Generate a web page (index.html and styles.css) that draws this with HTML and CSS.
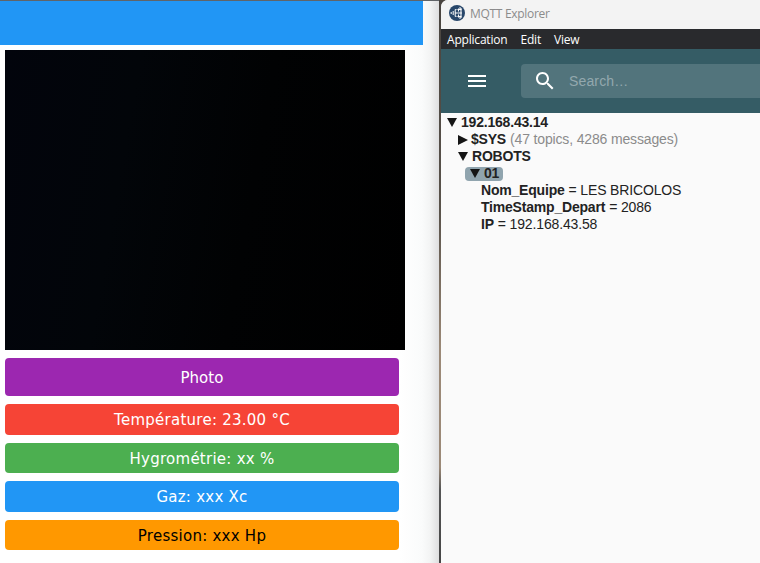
FILE: index.html
```html
<!DOCTYPE html>
<html lang="fr">
<head>
<meta charset="utf-8">
<title>Robot</title>
<link rel="stylesheet" href="styles.css">
</head>
<body>
<div class="desktop">
  <main class="robot">
    <header class="robot-bar"></header>
    <div class="camera"></div>
    <div class="controls">
      <div class="tile photo"><span>Photo</span></div>
      <div class="tile temp"><span>Température: 23.00 °C</span></div>
      <div class="tile hygro"><span>Hygrométrie: xx %</span></div>
      <div class="tile gaz"><span>Gaz: xxx Xc</span></div>
      <div class="tile pression"><span>Pression: xxx Hp</span></div>
    </div>
  </main>
  <section class="explorer">
    <div class="titlebar">
      <svg class="logo" viewBox="0 0 16 16"><circle cx="8" cy="8" r="8" fill="#28476b"/><g fill="none" stroke="#fff"><path d="M7.5 4.6H6.2v6.8h1.3M2.2 7v2M4.2 6v4M6 8h2.5" stroke-width="1"/><path d="M8.5 4.5h4M8.5 8h4.5M8.5 11.5h4M10 3h2M10 13h2" stroke-width="1.2"/><path d="M9.5 3.5v3M9.5 9.5v3M12 3v10" stroke-width="1.1"/></g></svg>
      <span class="title">MQTT Explorer</span>
    </div>
    <nav class="menubar"><span>Application</span><span>Edit</span><span>View</span></nav>
    <div class="toolbar">
      <svg class="burger" viewBox="0 0 24 24"><path d="M3 18h18v-2H3v2zm0-5h18v-2H3v2zm0-7v2h18V6H3z"/></svg>
      <div class="search">
        <svg class="lens" viewBox="0 0 24 24"><path d="M15.5 14h-.79l-.28-.27C15.41 12.59 16 11.11 16 9.5 16 5.91 13.09 3 9.5 3S3 5.91 3 9.5 5.91 16 9.5 16c1.61 0 3.09-.59 4.23-1.57l.27.28v.79l5 4.99L20.49 19l-4.99-5zm-6 0C7.01 14 5 11.99 5 9.5S7.01 5 9.5 5 14 7.01 14 9.5 11.99 14 9.5 14z"/></svg>
        <span class="placeholder">Search…</span>
      </div>
    </div>
    <div class="tree">
      <div class="row l0"><i class="down"></i><b>192.168.43.14</b></div>
      <div class="row l1"><i class="right"></i><b>$SYS</b><span class="meta">(47 topics, 4286 messages)</span></div>
      <div class="row l1"><i class="down"></i><b>ROBOTS</b></div>
      <div class="row l2"><span class="selected"><i class="down"></i><b>01</b></span></div>
      <div class="row l3"><b>Nom_Equipe</b><span>= LES BRICOLOS</span></div>
      <div class="row l3"><b>TimeStamp_Depart</b><span>= 2086</span></div>
      <div class="row l3"><b>IP</b><span>= 192.168.43.58</span></div>
    </div>
  </section>
</div>
</body>
</html>
```
FILE: styles.css
```css
* { box-sizing: border-box; }
body { margin: 0; overflow: hidden; }
.desktop {
  display: flex;
  width: 760px;
  height: 563px;
  background: linear-gradient(#49443f, #5a534b 38%, #9b8977 62%, #9b8977 83%, #555 87%, #454545);
}
.robot {
  width: 439px;
  margin-right: 2px;
  border-top: 1px solid #606468;
  background: linear-gradient(90deg, #fff 400px, #fafbfb 422px, #f3f4f4 430px, #dededf 439px);
}
.robot-bar { width: 423px; height: 44px; background: #2196f5; }
.camera {
  width: 400px;
  height: 300px;
  margin: 5px 0 8px 5px;
  background: linear-gradient(100deg, #02040c, #020509 30%, #010203 60%, #000);
}
.controls {
  display: grid;
  grid-template-rows: 38px 31px 30px 31px 30px;
  row-gap: 8px;
  width: 394px;
  margin-left: 5px;
}
.tile {
  display: flex;
  align-items: center;
  justify-content: center;
  border-radius: 4px;
  color: #fff;
  font: 15px "DejaVu Sans", Verdana, sans-serif;
  letter-spacing: .25px;
  white-space: nowrap;
}
.photo { padding-top: 2px; background: #9c27b0; letter-spacing: .05px; }
.temp { background: #f64436; }
.hygro { padding-top: 2px; background: #4caf50; }
.gaz { background: #2196f5; }
.pression { padding-top: 2px; background: #ff9800; color: #000; }

.explorer { flex: 1; background: #fafafa; border-top-left-radius: 7px; overflow: hidden; }
.titlebar {
  display: flex;
  align-items: center;
  height: 29px;
  padding: 0 0 3px 8px;
  background: #f3f3f3;
}
.logo { width: 16px; height: 16px; margin-right: 5px; }
.title { color: #8b8b8b; font: 12px "Open Sans", sans-serif; letter-spacing: -.3px; }
.menubar {
  display: flex;
  align-items: center;
  gap: 13px;
  height: 20px;
  padding-left: 6px;
  background: #292a2d;
  color: #fff;
  font: 12px "Open Sans", sans-serif;
  letter-spacing: -.2px;
}
.toolbar { display: flex; align-items: center; height: 64px; padding-left: 24px; background: #355c65; }
.burger { width: 24px; height: 24px; margin-right: 32px; fill: #fff; }
.search {
  display: flex;
  align-items: center;
  flex: 1;
  height: 34px;
  padding-left: 12px;
  border-radius: 4px 0 0 4px;
  background: #52747c;
}
.lens { width: 24px; height: 24px; fill: #fff; margin-right: 12px; }
.placeholder { color: #93a8ae; font: 14px "Liberation Sans", Arial, sans-serif; letter-spacing: .15px; }
.tree { padding-top: 1px; color: #222; font: 14px/17px "Liberation Sans", Arial, sans-serif; white-space: nowrap; letter-spacing: -.15px; }
.row { display: flex; align-items: center; height: 17px; }
.row b { letter-spacing: -.2px; }
.l0 { padding-left: 6px; }
.l1 { padding-left: 17px; }
.l2 { padding-left: 24px; }
.l3 { padding-left: 40px; gap: 4px; }
.down, .right { flex: none; border: 0 solid transparent; }
.down { margin-right: 4px; border-width: 9px 5px 0; border-top-color: #151515; }
.right { margin-right: 3px; border-width: 5px 0 5px 10px; border-left-color: #151515; }
.meta { margin-left: 4px; color: #8b8b8b; }
.selected {
  display: flex;
  align-items: center;
  width: 38px;
  height: 14px;
  padding-left: 5px;
  border-radius: 4px;
  background: #90a4ae;
}
```
